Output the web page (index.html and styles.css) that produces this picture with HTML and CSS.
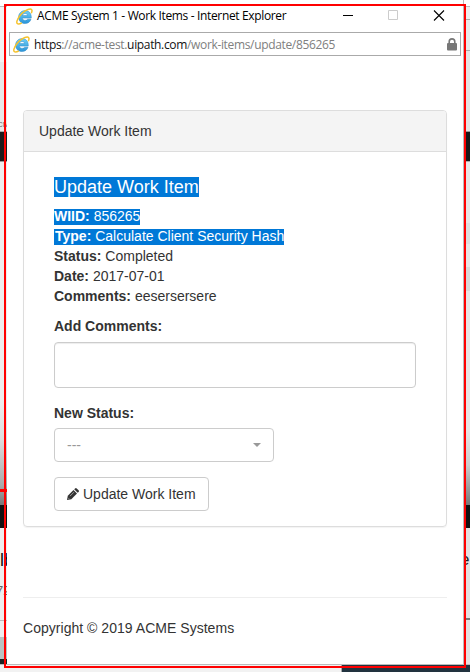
FILE: index.html
```
<!DOCTYPE html>
<html lang="en">
<head>
<meta charset="utf-8">
<title>ACME System 1 - Work Items</title>
<link rel="stylesheet" href="styles.css">
</head>
<body>
<svg width="0" height="0" class="defs"><defs>
<linearGradient id="blue" x1="0" y1="0" x2="0" y2="1"><stop offset="0" stop-color="#6fd0f7"/><stop offset="1" stop-color="#2b95d8"/></linearGradient>
<symbol id="ie" viewBox="0 0 17 17">
<path fill-rule="evenodd" d="M15.300 10.100H6.300c.2 1.500 1.300 2.300 2.800 2.300 1.100 0 1.900-.4 2.400-1.200h3.500c-.8 2.700-3 4.300-6 4.300-3.800 0-6.400-2.600-6.400-6.300S5.300 2.600 9.100 2.600c4 0 6.400 2.900 6.200 7.500zM6.400 7.600h5.300c-.2-1.300-1.200-2.100-2.600-2.100-1.400 0-2.400.8-2.700 2.100z" fill="url(#blue)" stroke="#2a86c4" stroke-width=".5"/>
<path d="M15.300 5.300c1.200-2.500.8-4.300-1-4.400C11.700.8 6.700 4 3.700 8 .8 11.800-.1 15.200 1.800 15.900c1 .3 2.500-.2 4-1.100" fill="none" stroke="#f5c22c" stroke-width="1.500"/>
</symbol>
</defs></svg>
<div class="desktop">
  <div class="strip left"><span class="peek l1">CM</span><span class="peek l2">lb</span><span class="peek l3">72</span><i class="redline"></i></div>
  <main class="window">
    <header class="titlebar">
      <svg class="ie"><use href="#ie"/></svg>
      <span class="title">ACME System 1 - Work Items - Internet Explorer</span>
      <svg class="controls" width="102" height="12" viewBox="0 0 102 12"><path d="M0 5.500h10" stroke="#000"/><path d="M45.500 .5h9v9h-9z" fill="none" stroke="#ccc"/><path d="M91 .5l10 10M101 .5L91 10.500" stroke="#000" stroke-width="1.100"/></svg>
    </header>
    <div class="address">
      <svg class="ie"><use href="#ie"/></svg>
      <span class="url"><b>https</b>://acme-test.<b>uipath.com</b>/work-items/update/856265</span>
      <svg class="lock" width="10" height="13" viewBox="0 0 10 13"><path d="M2.200 6V3.700a2.800 2.800 0 0 1 5.600 0V6" fill="none" stroke="#777" stroke-width="1.600"/><rect y="5" width="10" height="7.500" rx="1" fill="#777"/></svg>
    </div>
    <div class="page">
      <section class="panel">
        <div class="heading">Update Work Item</div>
        <div class="body">
          <h4><span class="sel">Update Work Item</span></h4>
          <p><span class="sel"><b>WIID:</b> 856265</span></p>
          <p><span class="sel in"><b>Type:</b> Calculate Client Security Hash</span></p>
          <p><b>Status:</b> Completed</p>
          <p><b>Date:</b> 2017-07-01</p>
          <p><b>Comments:</b> eesersersere</p>
          <label class="add">Add Comments:</label>
          <div class="input"></div>
          <label class="new">New Status:</label>
          <div class="select"><span>---</span><i class="caret"></i></div>
          <button class="btn"><svg width="12" height="12" viewBox="0 0 12 12"><path d="M0 12l.8-4.300L6.500 2 10 5.500l-5.700 5.700z" fill="#333"/><path d="M7.200 1.300L8.100.4q.8-.8 1.600 0l1.900 1.900q.8.800 0 1.600l-.9.900z" fill="#333"/><path d="M3 8.100L6.900 4.200M1.200 9.900l.9.900" stroke="#fff" stroke-width=".5"/></svg>Update Work Item</button>
        </div>
      </section>
      <hr>
      <footer>Copyright © 2019 ACME Systems</footer>
    </div>
  </main>
  <div class="strip right"><span class="peek r1">e</span><i class="dot d1"></i><i class="dot d2"></i></div>
  <div class="taskbar"></div>
  <div class="frame"></div>
</div>
</body>
</html>
```
FILE: styles.css
```
* { box-sizing: border-box; }
body { margin: 0; font: 14px/20px "Liberation Sans", Arial, sans-serif; color: #333; }
.defs { position: absolute; }
.desktop { position: relative; width: 470px; height: 672px; overflow: hidden; background: #f2f2f2; display: grid; grid-template-columns: 7px 456px 7px; grid-template-rows: 664px 8px; }
.strip { position: relative; overflow: hidden; }
.left { background: linear-gradient(#fff 0 6px, #bbb 6px 7px, #f3f3f3 7px 62px, #e9e9e9 62px 131px, #aaa 131px 132px, #1c1c1c 132px 161px, #999 161px 162px, #eee 162px 400px, #ddd 440px, #aaa 485px, #777 505px, #111 505px 528px, #eee 528px 620px, #bbb 620px 621px, #eee 621px 637px, #b9c4c2 637px 659px, #1c2525 659px); }
.right { border-left: 1px solid #bbb; background: linear-gradient(#fff 0 6px, #bbb 6px 7px, #eee 7px 19px, #aaa 19px 20px, #e9e9e9 20px 50px, #aaa 50px 51px, #e5e3e3 51px 131px, #999 131px 132px, #181818 132px 161px, #aaa 161px 162px, #e8e5e5 162px 223px, #ddd 223px 244px, #e8e5e5 244px 267px, #d9d7d7 267px 291px, #e8e5e5 291px 430px, #ccc 465px, #777 505px, #111 505px 528px, #e4e1e1 528px 618px, #777 618px 620px, #e4e1e1 620px); }
.peek { position: absolute; color: #222; }
.l1 { left: -3px; top: 115px; font-size: 8px; color: #666; }
.l2 { left: 0; top: 550px; font-size: 18px; color: #111; }
.l3 { left: -4px; top: 581px; font-size: 13px; color: #666; }
.r1 { left: -4px; top: 550px; font-size: 17px; }
.dot { position: absolute; left: -1px; width: 2px; height: 4px; background: #666; }
.d1 { top: 338px; }
.d2 { top: 591px; }
.redline { position: absolute; left: 0; top: 489px; width: 7px; height: 3px; background: #f00; }
.window { background: #fff; }
.taskbar { grid-column: 1 / 4; background: linear-gradient(90deg, #f2f2f2 341px, #aaa 341px 342px, #22333f 342px); border-top: 1px solid #bbb; }
.frame { position: absolute; left: 4px; top: 4px; width: 462px; height: 664px; border: 2px solid #f00; }
.titlebar { height: 32px; display: flex; align-items: center; padding: 0 18px 0 9px; color: #000; font: 12px/16px "Open Sans", "Noto Sans", sans-serif; letter-spacing: -.35px; }
.ie { width: 17px; height: 17px; flex: none; }
.title { margin-left: 4px; white-space: nowrap; width: 260px; }
.controls { margin-left: auto; }
.address { height: 24px; margin: 0 2px; border: 1px solid #aaa; display: flex; align-items: center; padding: 0 3px; font: 12px/16px "Open Sans", "Noto Sans", sans-serif; letter-spacing: -.34px; color: #808080; }
.url { margin-left: 4px; white-space: nowrap; position: relative; top: 1px; }
.url b { color: #111; font-weight: 400; }
.lock { margin-left: auto; }
.page { padding: 54px 16px 0; }
.panel { height: 417px; border: 1px solid #ddd; border-radius: 4px; box-shadow: 0 1px 1px rgba(0,0,0,.05); }
.heading { height: 41px; padding: 10px 15px; background: #f4f4f4; border-bottom: 1px solid #ddd; border-radius: 3px 3px 0 0; }
.body { padding: 25px 30px 0; display: flow-root; }
h4 { margin: 0 0 9px; font-size: 18px; font-weight: 400; line-height: 20px; }
p { margin: 0; white-space: nowrap; }
.sel { background: #0078d7; color: #fff; }
p .sel { padding-bottom: 1px; background: linear-gradient(transparent 1px, #0078d7 1px); }
.in { padding-left: 1px; }
label { display: block; font-weight: 700; }
.add { margin-top: 10px; }
.input { height: 46px; margin-top: 6px; border: 1px solid #ccc; border-radius: 4px; box-shadow: inset 0 1px 1px rgba(0,0,0,.075); }
.new { margin-top: 15px; }
.select { width: 220px; height: 34px; margin-top: 5px; border: 1px solid #ccc; border-radius: 4px; padding: 0 12px; display: flex; align-items: center; justify-content: space-between; color: #999; }
.caret { border: 4px solid transparent; border-top-color: #999; border-bottom: 0; }
.btn { width: 155px; height: 34px; margin-top: 15px; padding: 0 12px; border: 1px solid #ccc; border-radius: 4px; background: #fff; color: #333; font: inherit; display: flex; align-items: center; gap: 4px; white-space: nowrap; }
hr { margin: 70px 0 20px; border: 0; border-top: 1px solid #eee; }
footer { letter-spacing: .03px; }
```
